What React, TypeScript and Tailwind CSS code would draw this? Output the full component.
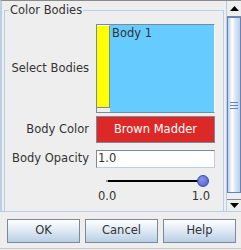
const font = "font-['DejaVu_Sans',sans-serif]";

function ScrollBar() {
  return (
    <div className="flex w-[15px] flex-col border-l border-[#b8cfe5] bg-[#eeeeee]">
      {/* up arrow */}
      <div className="flex h-[16px] items-center justify-center border-b border-[#7a8a99]">
        <svg width="9" height="5" viewBox="0 0 9 5">
          <path d="M0 5 L4.5 0 L9 5 Z" fill="#000" />
        </svg>
      </div>
      {/* thumb */}
      <div className="relative flex h-[176px] items-center justify-center border border-[#6382bf] bg-[linear-gradient(to_right,#b8cfe5,#ffffff_35%,#dae7f3_60%,#b8cfe5)]">
        <div className="flex flex-col gap-[2px]">
          <div className="h-px w-[8px] bg-[#6382bf]" />
          <div className="h-px w-[8px] bg-[#6382bf]" />
          <div className="h-px w-[8px] bg-[#6382bf]" />
        </div>
      </div>
      <div className="flex-1" />
      {/* down arrow */}
      <div className="flex h-[12px] items-start justify-center border-t border-[#7a8a99] pt-[3px]">
        <svg width="9" height="5" viewBox="0 0 9 5">
          <path d="M0 0 L4.5 5 L9 0 Z" fill="#000" />
        </svg>
      </div>
    </div>
  );
}

function DialogButton({ label }: { label: string }) {
  return (
    <button className="flex h-[24px] w-[73px] items-center justify-center border border-[#7a8a99] bg-[linear-gradient(to_bottom,#ffffff,#dde8f3_50%,#b8cfe5)] text-[11.5px] text-[#333333]">
      {label}
    </button>
  );
}

export default function App() {
  return (
    <div className={`flex h-[250px] w-[241px] flex-col bg-[#eeeeee] text-[#333333] ${font}`}>
      {/* scroll pane */}
      <div className="flex h-[212px] border-l-2 border-t border-b border-l-[#b8cfe5] border-t-[#8a8a8a] border-b-[#b8cfe5]">
        <div className="relative flex-1 overflow-hidden pl-[2px]">
          {/* titled group */}
          <div className="absolute left-[2px] right-[2px] top-[9px] h-[220px] border border-[#b8cfe5]" />
          <div className="absolute left-[7px] top-[2px] bg-[#eeeeee] px-[1px] text-[11.5px] leading-[15px]">
            Color Bodies
          </div>
          <div className="grid grid-cols-[86px_119px] items-center gap-x-[6px] pt-[23px] text-[11.5px]">
            <div className="self-center pr-[1px] text-right">Select Bodies</div>
            <div className="flex h-[89px] border border-[#7a8a99] border-r-white">
              <div className="mb-[4px] w-[13px] border-r border-b border-[#7a8a99] border-t border-t-white bg-[#ffff00]" />
              <div className="flex-1 bg-[#66ccff] pl-[2px] pt-[1px] leading-[15px]">Body 1</div>
            </div>

            <div className="mt-[3px] pr-[1px] text-right">Body Color</div>
            <div className="mt-[3px] flex h-[27px] items-center justify-center border border-[#7a8a99] bg-[#dd2828] text-white">
              Brown Madder
            </div>

            <div className="mt-[7px] pr-[1px] text-right">Body Opacity</div>
            <div className="mt-[7px] flex h-[18px] items-center border border-[#7a8a99] border-r-[#b8cfe5] border-b-[#b8cfe5] bg-white pl-[1px]">
              1.0
            </div>

            <div />
            <div className="flex flex-col pt-[7px]">
              <div className="relative h-[12px]">
                <div className="absolute left-[10px] right-[13px] top-[5px] h-[2px] bg-black" />
                <div className="absolute left-[10px] top-[5px] h-[2px] w-[2px] bg-[#9a9a9a]" />
                <div className="absolute right-[6px] top-0 h-[12px] w-[12px] rounded-full border border-[#3a48a8] bg-[radial-gradient(circle_at_40%_35%,#8a96e8,#4a58c8)]" />
              </div>
              <div className="flex justify-between px-[2px] pt-[2px] leading-[15px]">
                <span>0.0</span>
                <span className="pr-[3px]">1.0</span>
              </div>
            </div>
          </div>
        </div>
        <ScrollBar />
      </div>

      {/* buttons */}
      <div className="flex gap-[5px] pl-[7px] pt-[7px]">
        <DialogButton label="OK" />
        <DialogButton label="Cancel" />
        <DialogButton label="Help" />
      </div>
      <div className="flex-1" />
      <div className="mb-[1px] h-px bg-[#c8c8c8]" />
    </div>
  );
}
